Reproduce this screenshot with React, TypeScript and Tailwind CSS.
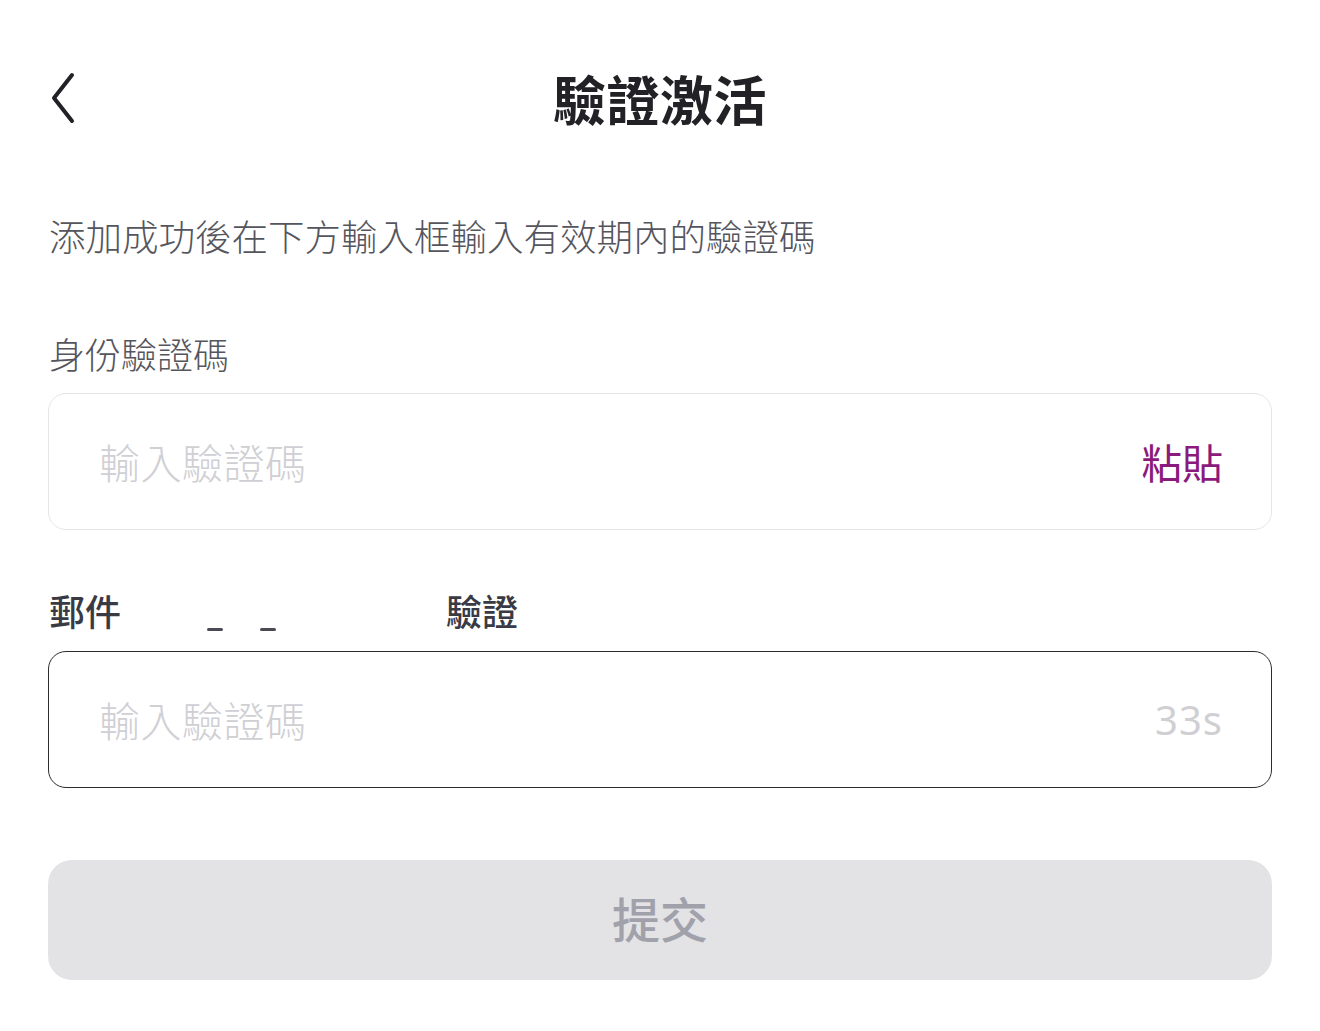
import React from "react";

const font = { fontFamily: '"Noto Sans CJK TC", "Noto Sans", sans-serif' };

export default function App() {
  return (
    <div className="w-[1320px] h-[1031px] bg-white overflow-hidden" style={font}>
      <div className="px-[48px]">
        {/* Header */}
        <div className="relative h-[200px] flex items-start justify-center pt-[66px]">
          <button className="absolute left-[2px] top-[72px] w-[26px] h-[52px]">
            <svg width="26" height="52" viewBox="0 0 26 52" fill="none">
              <path d="M22 3 L4 26 L22 49" stroke="#222226" strokeWidth="4" strokeLinecap="round" strokeLinejoin="round" />
            </svg>
          </button>
          <h1 className="text-[53px] leading-[64px] font-bold text-[#222226] tracking-[0.5px]">驗證激活</h1>
        </div>

        {/* Description */}
        <p className="text-[36.5px] leading-[72px] font-light text-[#55555d] pl-[1px]">
          添加成功後在下方輸入框輸入有效期內的驗證碼
        </p>

        {/* Identity code */}
        <div className="mt-[58px] text-[36px] leading-[46px] font-light text-[#55555d] pl-[1px]">身份驗證碼</div>
        <div className="mt-[17px] h-[137px] rounded-[18px] border-[1.5px] border-[#e6e6e9] flex items-center justify-between pl-[50px] pr-[48px]">
          <span className="text-[41px] font-light text-[#cfcfd4] tracking-[0.5px]">輸入驗證碼</span>
          <span className="text-[41px] text-[#8a1a7c]">粘貼</span>
        </div>

        {/* Email code */}
        <div className="mt-[57px] h-[46px] flex items-center text-[36px] leading-[46px] font-medium text-[#3a3a44] pl-[1px]">
          <span>郵件</span>
          <span className="inline-block w-[16px] h-[3px] bg-[#4a4a55] rounded-full ml-[86px] mt-[38px]" />
          <span className="inline-block w-[16px] h-[3px] bg-[#4a4a55] rounded-full ml-[37px] mt-[38px]" />
          <span className="ml-[170px]">驗證</span>
        </div>
        <div className="mt-[18px] h-[137px] rounded-[18px] border-[1.5px] border-[#2b2b30] flex items-center justify-between pl-[50px] pr-[48px]">
          <span className="text-[41px] font-light text-[#cfcfd4] tracking-[0.5px]">輸入驗證碼</span>
          <span className="text-[40px] text-[#cfcfd4] tracking-[1px]" style={{ fontFamily: '"Noto Sans", sans-serif' }}>33s</span>
        </div>

        {/* Submit */}
        <button className="mt-[72px] w-full h-[120px] rounded-[24px] bg-[#e3e3e6] flex items-center justify-center pb-[6px]">
          <span className="text-[48px] font-medium text-[#a1a1ab]">提交</span>
        </button>
      </div>
    </div>
  );
}
